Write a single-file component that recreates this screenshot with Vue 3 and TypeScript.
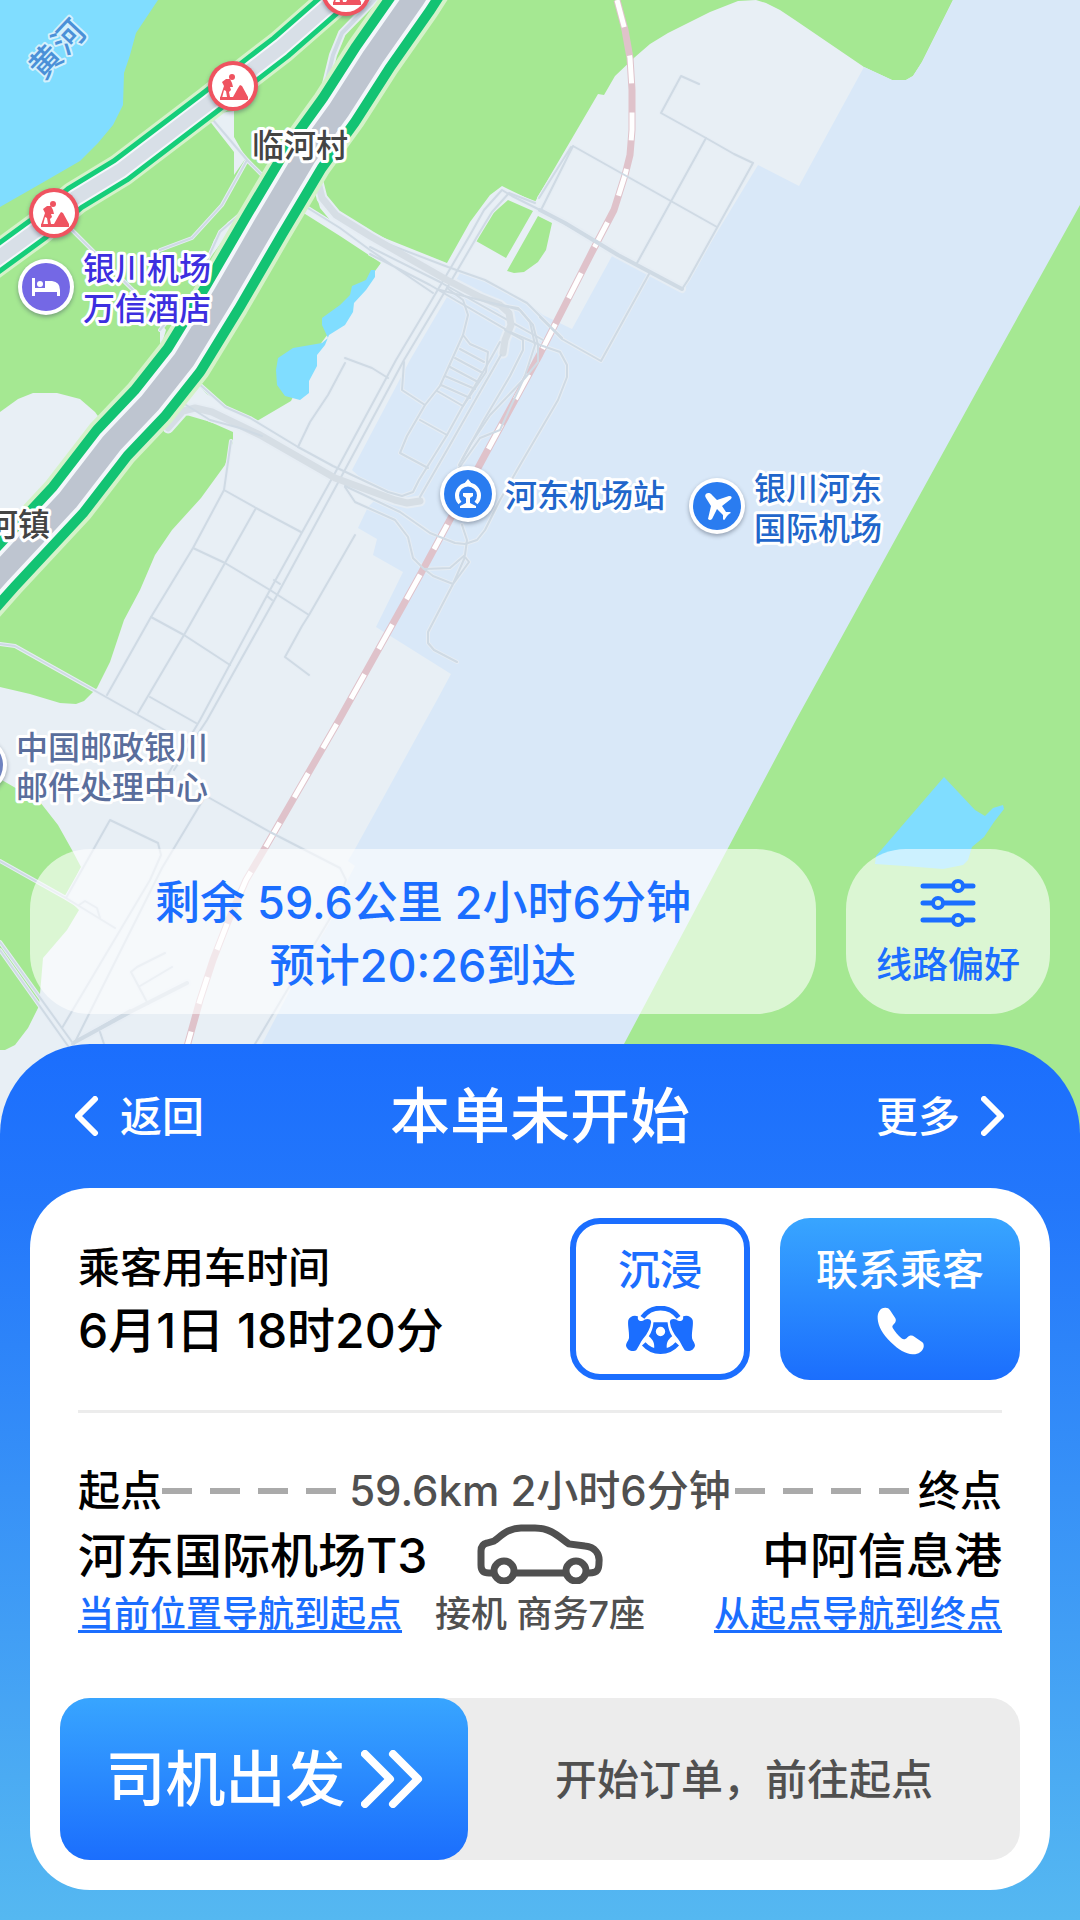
<script setup lang="ts">
interface Label {
  x: number
  y: number
  lines: string[]
  tone: string
}

interface Road {
  d: string
  kind: 'thin' | 'mid' | 'wide'
}

const labels: Label[] = [
  { x: 83, y: 280, lines: ['银川机场', '万信酒店'], tone: 'hotel' },
  { x: 252, y: 157, lines: ['临河村'], tone: 'town' },
  { x: -14, y: 536, lines: ['河镇'], tone: 'town' },
  { x: 505, y: 507, lines: ['河东机场站'], tone: 'transit' },
  { x: 754, y: 500, lines: ['银川河东', '国际机场'], tone: 'transit' },
  { x: 16, y: 759, lines: ['中国邮政银川', '邮件处理中心'], tone: 'post' },
]

const works = [
  { x: 233, y: 86 },
  { x: 54, y: 213 },
  { x: 346, y: -9 },
]

const expressway = 'M440 -42 L413 0 L373 57 L339 110 L305 157 L265 224 L222 298 L184 360 L150 403 L112 443 L68 500 L0 573 L-40 618'
const ringRoad = 'M380 -40 L329 5 L281 47 L255 67 L209 103 L121 170 L75 198 L38 229 L-10 264'
const railway = 'M617 0 L625 30 L630 58 L632 90 L632 130 L630 155 L625 175 L614 210 L593 250 L540 354 L485 455 L420 575 L339 720 L265 848 L246 880 L227 924 L213 960 L200 1000 L186 1050'

const roads: Road[] = [
  // Village lanes around the two trunk roads
  { kind: 'thin', d: 'M213 120 L247 160 L267 180 M247 160 L222 205 L192 238 L160 250 M72 230 L92 250 L135 292 M245 210 L220 232 L205 265 M160 330 L170 318' },
  { kind: 'mid', d: 'M378 -4 L342 33 L333 55 L325 88' },
  // Industrial park north of the railway
  { kind: 'thin', d: 'M699 84 L681 76 L661 113 L706 138 L734 154 L753 163 L688 280 L682 289 M706 138 L637 263 M573 146 L717 227 M573 146 L542 208 M571 147 L539 198 M649 274 L601 361 L562 339 L540 317' },
  { kind: 'mid', d: 'M540 210 L565 223 L618 255 L682 289' },
  // Parallel boulevards running south-west
  { kind: 'thin', d: 'M600 243 L540 210 L512 196 L502 190 L484 210 L470 235 L430 303 L396 360 L335 473 L270 590 L200 720 L168 774' },
  { kind: 'thin', d: 'M535 203 L509 193 L492 212 L478 235 L437 305 L404 360 L340 479 L276 597 L207 720 L174 770 M274 580 L280 584 M267 596 L272 600' },
  { kind: 'thin', d: 'M303 205 L340 228 L370 250 L405 274 L433 293 M370 247 L440 282 L543 340 M385 243 L448 267 L485 280 L527 303 L562 338 M370 254 L430 285 L510 332' },
  { kind: 'wide', d: 'M318 182 L322 198 L336 215 L370 236 L447 280 L480 297 L500 305 L509 313 L511 325 L505 340 L503 353' },
  { kind: 'wide', d: 'M168 428 L183 411 L195 408 L212 412 L260 435 L335 478 L395 500 L407 503 L420 501' },
  { kind: 'thin', d: 'M183 403 L210 420 L240 428 L262 436 M197 382 L225 407 L250 418 L298 447 L333 466 L388 492 L402 496 L413 492 L419 480 L447 435 L463 406 L490 360 L500 342' },
  // Terminal and car parks
  { kind: 'thin', d: 'M447 288 L463 300 L468 315 L463 335 L440 386 L425 405 L407 436 L400 453 L428 468 M463 335 L470 344 L488 352 L486 372 L463 406 M404 362 L402 390 L425 405 M420 420 L447 435' },
  { kind: 'thin', d: 'M460 349 L484 362 M455 358 L481 372 M450 367 L478 382 M445 376 L475 389 M441 385 L470 398 M437 391 L463 406' },
  { kind: 'thin', d: 'M501 355 L481 390 L447 450 L420 497 M345 363 L328 395 L310 422 L298 447 M345 358 L372 368 L388 378' },
  { kind: 'thin', d: 'M440 290 L500 305 L520 310 L533 325 L538 345 L538 362 L525 378 L490 415 L470 445 L459 465' },
  { kind: 'thin', d: 'M490 303 L518 308 L530 322 L535 345 L525 376 L510 408 L500 430 L480 438 L459 468 M505 330 L523 340 L523 350 L510 376 L484 420 L462 460' },
  { kind: 'thin', d: 'M510 332 L540 345 L560 352 L567 365 L567 377 L558 400 L520 465 L500 500 L485 530 L477 540 L465 544 L455 543 L430 533 L400 512 L345 486' },
  { kind: 'thin', d: 'M345 487 L355 502 L395 520 L408 537 L413 558 L424 569 L450 568 L465 555 L467 540 L462 525 M424 569 L433 576 L453 584 L469 562 L465 557 L453 584 L428 632 L428 643 L434 650 L457 662' },
  // Southern street grid
  { kind: 'thin', d: 'M231 441 L224 490 L193 548 L151 617 L107 695 M224 490 L256 508 L301 532 M256 508 L225 563 L184 635 L138 713 M193 548 L225 563 L270 590 L309 615 L302 626 L285 657 L309 675 M309 615 L355 535' },
  { kind: 'thin', d: 'M151 617 L184 635 L230 665 M0 644 L15 646 L90 688 L138 715 L168 732 M150 697 L196 723 M206 796 L270 832 L340 868 L346 880 L338 905 L255 1044' },
  { kind: 'thin', d: 'M0 861 L66 898 L115 928 M66 898 L110 820 L158 843 L161 855 L150 880 L62 1028 M203 800 L162 868 L74 1044 M79 905 L85 901 L97 908 L100 918 M0 942 L72 1042 M0 950 L68 1046' },
  { kind: 'thin', d: 'M72 1044 L130 1010 M148 1004 L131 972 L137 967 L165 953 M140 986 L172 967 M100 1032 L104 1044' },
  { kind: 'mid', d: 'M75 1042 L130 1012 L187 983' },
]
</script>

<template>
  <main class="page">
    <svg class="map" viewBox="0 0 1080 1140" preserveAspectRatio="xMidYMin slice" role="img" aria-label="地图">
      <rect width="1080" height="1140" class="land" />
      <path class="park" d="M0 0 H953 L922 62 L913 76 L906 80 H892 L864 67 L500 300 L381 263 L316 350 L291 401 L257 421 L200 400 L190 413 L233 432 V442 L225 465 L201 498 L172 530 L155 555 L140 590 L124 620 L110 662 L97 688 L84 701 L76 704 L60 703 L30 694 L0 687 Z" />
      <path class="land" d="M864 67 L795 20 L780 10 L766 3 L756 0 L738 1 L710 12 L688 23 L668 33 L650 44 L635 57 L615 76 L604 95 L598 94 L540 193 L535 202 L502 186 L490 195 L470 222 L447 263 L382 237 L345 217 L328 200 L318 180 L315 190 L320 208 L330 220 L300 203 L302 212 L340 236 L381 263 L360 300 L330 350 L316 362 L309 394 L320 430 L700 400 Z" />
      <path class="land" d="M0 412 L18 399 L33 393 H57 L80 399 L95 412 L103 423 L106 440 L0 575 Z" />
      <path class="land" d="M205 115 L234 111 V137 L246 158 L234 175 V152 Z M245 210 L228 222 L214 240 L205 265 Z M166 330 L160 322 L160 350 Z M192 378 L207 394 L229 408 L257 421 L262 437 L183 414 Z" />
      <path class="airport" d="M953 0 H1080 V1140 H220 L262 1044 L355 866 L348 861 L355 849 L437 700 L451 674 L376 627 L403 572 L373 555 L377 539 L358 528 L368 507 L380 495 L352 470 L410 360 L447 297 L460 273 L490 283 L525 300 L543 315 L572 329 L612 256 L682 290 L758 165 L799 186 L864 67 L892 80 H906 L913 76 L922 62 Z" />
      <path class="park" d="M1080 205 L994 360 L796 720 L624 1044 L570 1140 H1080 Z" />
      <path class="park" d="M476 241 L490 216 L508 200 L533 211 L506 258 Z M507 271 L538 216 L552 223 L546 250 L538 262 L524 272 L514 273 Z M0 779 L40 802 L58 825 L72 850 L81 867 L66 897 L79 910 L67 930 L43 958 L39 1006 L28 1028 L15 1045 L5 1050 H0 Z" />
      <path class="water" d="M0 0 H158 L136 33 L130 55 L124 73 L123 105 L113 125 L98 143 L80 161 L42 183 L0 207 Z" />
      <path class="water" d="M371 270 L375 270 V277 L366 290 L354 303 L353 312 L345 325 L329 335 L325 345 L317 355 V366 L309 381 V393 L300 400 L285 396 L277 385 L276 370 L278 358 L293 348 L322 343 L328 338 L322 325 V318 L340 305 L350 295 L352 286 L366 280 Z" />
      <path class="water" d="M944 777 L975 810 L985 816 L993 808 L1003 805 L1004 809 L994 822 L984 837 L972 847 L968 860 L963 865 L943 869 L905 866 L875 864 L876 856 Z" />

      <g class="roads">
        <path v-for="(road, i) in roads" :key="'c' + i" :d="road.d" :class="['casing', road.kind]" />
      </g>
      <path class="rail" :d="railway" />
      <path class="rail-dash" :d="railway" />
      <g class="roads">
        <path v-for="(road, i) in roads" :key="i" :d="road.d" :class="['line', road.kind]" />
      </g>

      <g class="trunk ring">
        <path class="halo" :d="ringRoad" />
        <path class="traffic" :d="ringRoad" />
        <path class="edge" :d="ringRoad" />
        <path class="core" :d="ringRoad" />
      </g>
      <g class="trunk express">
        <path class="halo" :d="expressway" />
        <path class="traffic" :d="expressway" />
        <path class="edge" :d="expressway" />
        <path class="core" :d="expressway" />
      </g>

      <g v-for="(site, i) in works" :key="'w' + i" :transform="`translate(${site.x} ${site.y})`">
        <circle class="works-ring pin-shadow" r="25" />
        <circle r="21" fill="#fff" />
        <g class="works-icon">
          <circle cx="-1" cy="-9" r="3" />
          <path d="M-11 -4 L-7 -7 L-3 -7 L-1 -3 L0 1 H-3 L-2 4 L-4 6 L-3 11 H-6 L-7 5 L-9 4 L-11 12 L-13 12 L-9 0 Z M0 11 L5 2 L7 -1 L9 0 L15 11 Z M-13 11 H15 V14 H-13 Z" />
        </g>
      </g>

      <g transform="translate(46 287)">
        <circle class="pin-shadow" r="28" fill="#fff" />
        <circle r="24" fill="#7468e5" />
        <path d="M-14 -9 H-11 V1 H-1 V-6 H6 Q14 -5 14 3 V9 H11 V5 H-11 V9 H-14 Z" fill="#fff" />
        <circle cx="-6" cy="-3" r="3" fill="#fff" />
      </g>
      <g transform="translate(468 494)">
        <circle class="pin-shadow" r="28" fill="#fff" />
        <circle r="24" fill="#2a7cf0" />
        <path d="M-8 9 A11 11 0 1 1 8 9" fill="none" stroke="#fff" stroke-width="4" />
        <path d="M-4 -10 L0 -15 L4 -10 Z M-5 -1 H5 V2 L2 4 V9 L8 12 V14 H-8 V12 L-2 9 V4 L-5 2 Z" fill="#fff" />
      </g>
      <g transform="translate(717 506)">
        <circle class="pin-shadow" r="28" fill="#fff" />
        <circle r="24" fill="#2a7cf0" />
        <path d="M-11 -8 C-14 -12 -8 -15 -5 -11 L0 -6 L12 -10 Q16 -10 14 -7 L5 0 L9 6 L13 6 Q15 7 12 8 L10 10 L8 13 Q7 15 6 13 V9 L0 3 L-5 13 Q-7 15 -9 13 L-6 0 Z" fill="#fff" />
      </g>
      <g transform="translate(-21 765)">
        <circle class="pin-shadow" r="28" fill="#fff" />
        <circle r="24" fill="#6f83c0" />
      </g>

      <text class="label river" transform="translate(46 62) rotate(-47)" text-anchor="middle">
        <tspan x="0" y="11">黄</tspan><tspan x="34" y="11">河</tspan>
      </text>
      <text v-for="label in labels" :key="label.lines[0]" :class="['label', label.tone]">
        <tspan v-for="(line, i) in label.lines" :key="line" :x="label.x" :y="label.y + i * 40">{{ line }}</tspan>
      </text>
    </svg>

    <section class="status">
      <p class="eta">
        剩余 59.6公里 2小时6分钟<br />预计20:26到达
      </p>
      <button type="button" class="prefs">
        <span class="prefs-icon">
          <svg width="56" height="48" viewBox="0 0 56 48" fill="none" stroke="currentColor" stroke-width="5" stroke-linecap="round">
            <path d="M3 7 H31 M45 7 H53 M3 24 H11 M25 24 H53 M3 41 H31 M45 41 H53" />
            <g stroke-width="4"><circle cx="38" cy="7" r="5" /><circle cx="18" cy="24" r="5" /><circle cx="38" cy="41" r="5" /></g>
          </svg>
        </span>
        线路偏好
      </button>
    </section>

    <section class="panel">
      <header class="bar">
        <button type="button" class="nav">
          <svg width="24" height="40" viewBox="0 0 24 40"><path d="M20 3 L3 20 L20 37" /></svg>
          返回
        </button>
        <h1>本单未开始</h1>
        <button type="button" class="nav end">
          更多
          <svg width="24" height="40" viewBox="0 0 24 40"><path d="M3 3 L20 20 L3 37" /></svg>
        </button>
      </header>

      <div class="card">
        <div class="summary">
          <div class="when">
            <p>乘客用车时间</p>
            <p class="time">6月1日 18时20分</p>
          </div>
          <button type="button" class="tile outline">
            <span>沉浸</span>
            <span class="glyph">
              <svg width="69" height="49" viewBox="48 44 206 146">
                <g fill="none" stroke="currentColor" stroke-width="14">
                  <path d="M97 78 A66 66 0 0 1 205 78" />
                  <path d="M101 157 A66 66 0 0 0 201 157" />
                </g>
                <path fill="currentColor" fill-rule="evenodd" d="M130 92 H172 C174 110 179 124 186 134 C172 144 168 156 170 170 L168 184 H134 L132 170 C134 156 129 144 116 134 C124 122 129 108 130 92 Z M137 120 a14 14 0 1 0 28 0 a14 14 0 1 0 -28 0 Z" />
                <path id="glove" fill="currentColor" d="M55 86 C59 75 72 70 84 75 C80 86 92 94 104 84 C114 80 124 84 123 92 C121 110 112 126 99 142 C92 151 86 166 79 175 C72 181 50 179 48 161 C50 150 56 148 57 138 C58 120 52 100 55 86 Z" />
                <use href="#glove" transform="translate(302 0) scale(-1 1)" />
              </svg>
            </span>
          </button>
          <button type="button" class="tile solid">
            <span>联系乘客</span>
            <span class="glyph">
              <svg width="47" height="48" viewBox="798 46 142 144">
                <path fill="currentColor" d="M824 48 C808 47 799 62 800 80 C801 102 815 128 840 152 C862 174 886 188 905 188 C922 189 936 180 939 166 C940 158 938 154 934 151 L912 136 C904 130 896 131 890 137 C884 144 878 145 872 140 C862 132 852 120 846 110 C843 104 844 101 850 96 C856 90 856 84 853 79 L838 56 C834 50 830 48 824 48 Z" />
              </svg>
            </span>
          </button>
        </div>

        <hr />

        <div class="trip">
          <div class="route">
            <span>起点</span>
            <i class="dashes"></i>
            <span class="distance muted">59.6km 2小时6分钟</span>
            <i class="dashes"></i>
            <span>终点</span>
          </div>
          <div class="stops">
            <div class="stop">
              <strong>河东国际机场T3</strong>
              <a href="#to-start">当前位置导航到起点</a>
            </div>
            <div class="stop center muted">
              <span class="car">
                <svg width="126" height="60" viewBox="0 0 126 60" fill="none" stroke="currentColor" stroke-width="7">
                  <path d="M17 49 H12 C6 49 4 46 4 41 V27 C4 23 6 20 10 19 L17 17 C24 12 31 4 44 4 H58 C75 4 83 14 92 20 L108 22 C118 23 123 30 122 38 C122 45 121 49 112 49 H109 M36 49 H89" />
                  <circle cx="27" cy="47" r="10" /><circle cx="99" cy="47" r="10" />
                </svg>
              </span>
              <span class="kind">接机 商务7座</span>
            </div>
            <div class="stop right">
              <strong>中阿信息港</strong>
              <a href="#to-end">从起点导航到终点</a>
            </div>
          </div>
        </div>

        <div class="slide">
          <button type="button" class="go">
            司机出发
            <svg width="62" height="58" viewBox="0 0 62 58"><path d="M4 4 L29 29 L4 54 M32 4 L57 29 L32 54" /></svg>
          </button>
          <p class="hint">开始订单，前往起点</p>
        </div>
      </div>
    </section>
  </main>
</template>

<style>
body {
  margin: 0;
}
</style>

<style scoped>
.page {
  position: relative;
  box-sizing: border-box;
  min-height: 100vh;
  display: flex;
  flex-direction: column;
  justify-content: flex-end;
  overflow: hidden;
  background: #e8eff5;
  color: #000;
  font-family: Inter, 'Noto Sans CJK SC', sans-serif;
  font-weight: 500;
  font-size: 42px;
  line-height: 63px;
}

.page p,
.page h1 {
  margin: 0;
  font-weight: 500;
}

.page button {
  font: inherit;
  border: 0;
  padding: 0;
  background: none;
  color: inherit;
  cursor: pointer;
}

.page svg {
  display: block;
  flex: none;
}

/* Map canvas */
.page .map {
  position: absolute;
  top: 0;
  left: 0;
  width: 100%;
}

.land { fill: #e8eff5; }
.park { fill: #a5e892; }
.water { fill: #80ddff; }
.airport { fill: #d9e8f8; }

.roads path {
  fill: none;
  stroke-linejoin: round;
  stroke-linecap: round;
}

.line.thin { stroke: #cfdae4; stroke-width: 2; }
.line.mid { stroke: #cfdae4; stroke-width: 4; }
.line.wide { stroke: #d6dee5; stroke-width: 7; }
.casing.thin { stroke: #e6edf4; stroke-width: 4; }
.casing.mid { stroke: #e6edf4; stroke-width: 8; }
.casing.wide { stroke: #e6edf4; stroke-width: 11; }

.rail,
.rail-dash,
.trunk path {
  fill: none;
  stroke-linejoin: round;
}

.rail { stroke: #dfc2ca; stroke-width: 7; }
.rail-dash { stroke: #fff; stroke-width: 5; stroke-dasharray: 28 29; }

.halo { stroke: #d5f2ca; }
.edge { stroke: #f4f7fb; }
.ring .halo { stroke-width: 34; }
.ring .traffic { stroke: #15ce7a; stroke-width: 28; }
.ring .edge { stroke-width: 18; }
.ring .core { stroke: #d8dfe7; stroke-width: 14; }
.express .halo { stroke-width: 58; }
.express .traffic { stroke: #13c373; stroke-width: 50; }
.express .edge { stroke-width: 30; }
.express .core { stroke: #bec5d0; stroke-width: 22; }

.pin-shadow { filter: drop-shadow(0 2px 2px rgba(60, 70, 90, 0.45)); }
.works-ring,
.works-icon { fill: #ef5360; }

.label {
  font-size: 32px;
  font-family: 'Noto Sans CJK SC', sans-serif;
  stroke: #fff;
  stroke-width: 6px;
  stroke-linejoin: round;
  paint-order: stroke;
}

.hotel { fill: #3d2fe0; }
.town { fill: #444; }
.transit { fill: #2166cb; }
.post { fill: #5a6e9c; }
.river { fill: #4a90d8; stroke: #d4f0fc; stroke-width: 4px; }

/* Floating trip status */
.status {
  position: relative;
  display: flex;
  gap: 30px;
  margin: 30px;
  color: #1b6eff;
}

.eta,
.prefs {
  box-sizing: border-box;
  min-height: 165px;
  border-radius: 60px;
}

.eta {
  flex: 1;
  padding: 22px 30px 17px;
  background: rgba(255, 255, 255, 0.6);
  font-size: 45px;
  text-align: center;
}

.page .prefs {
  width: 204px;
  padding: 22px 0 17px;
  background: rgba(255, 255, 255, 0.6);
  font-size: 36px;
  line-height: 63px;
}

.prefs-icon {
  height: 63px;
  display: grid;
  place-items: center;
}

/* Order panel */
.panel {
  position: relative;
  padding: 0 30px 30px;
  border-radius: 90px 90px 0 0;
  background: linear-gradient(#1b6efd, #2377fb 18%, #55b8f1);
}

.bar {
  display: grid;
  grid-template-columns: 1fr auto 1fr;
  align-items: center;
  min-height: 144px;
  padding: 0 45px;
  color: #fff;
}

.bar h1 {
  font-size: 60px;
}

.nav {
  display: flex;
  align-items: center;
  gap: 21px;
}

.nav.end {
  justify-self: end;
}

.nav path,
.go path {
  fill: none;
  stroke: currentColor;
  stroke-width: 6;
  stroke-linecap: round;
  stroke-linejoin: round;
}

.go path {
  stroke-width: 8;
}

.card {
  padding: 30px;
  border-radius: 60px;
  background: #fff;
}

.summary {
  display: flex;
  align-items: center;
  gap: 30px;
}

.when {
  flex: 1;
  padding-left: 18px;
}

.time {
  font-size: 48px;
}

.page .tile {
  box-sizing: border-box;
  height: 162px;
  display: flex;
  flex-direction: column;
  align-items: center;
  justify-content: center;
  border-radius: 30px;
}

.page .outline {
  width: 180px;
  border: 6px solid #1b6eff;
  color: #1b6eff;
}

.page .solid {
  width: 240px;
  background: linear-gradient(#38a5ff, #1b6efd);
  color: #fff;
}

.glyph {
  height: 60px;
  display: grid;
  place-items: center;
}

hr {
  height: 3px;
  margin: 30px 18px 45px;
  border: 0;
  background: #ececec;
}

.trip {
  margin: 0 18px 57px;
}

.route {
  display: flex;
  align-items: center;
  line-height: 66px;
}

.distance {
  flex: 1;
  text-align: center;
  white-space: nowrap;
}

.dashes {
  width: 174px;
  height: 6px;
  margin-right: 9px;
  background: repeating-linear-gradient(90deg, #aaa 0 30px, transparent 30px 48px);
}

.muted {
  color: #505050;
}

.stops {
  display: grid;
  grid-template-columns: 1fr auto 1fr;
}

.stop {
  display: flex;
  flex-direction: column;
  align-items: flex-start;
  white-space: nowrap;
}

.stop.center {
  align-items: center;
}

.stop.right {
  align-items: flex-end;
}

.stop strong {
  font-size: 48px;
  font-weight: 500;
}

.stop a,
.kind {
  font-size: 36px;
  line-height: 54px;
}

.stop a {
  color: #1b6eff;
  text-decoration: underline 3px;
  text-underline-offset: 3px;
  text-decoration-skip-ink: none;
}

.car {
  height: 63px;
}

.slide {
  display: flex;
  align-items: center;
  border-radius: 30px;
  background: #ececec;
}

.page .go {
  width: 408px;
  height: 162px;
  display: flex;
  align-items: center;
  justify-content: center;
  gap: 15px;
  border-radius: 30px;
  background: linear-gradient(#38a5ff, #1b6efd);
  color: #fff;
  font-size: 60px;
}

.hint {
  flex: 1;
  text-align: center;
  color: #505050;
}
</style>
